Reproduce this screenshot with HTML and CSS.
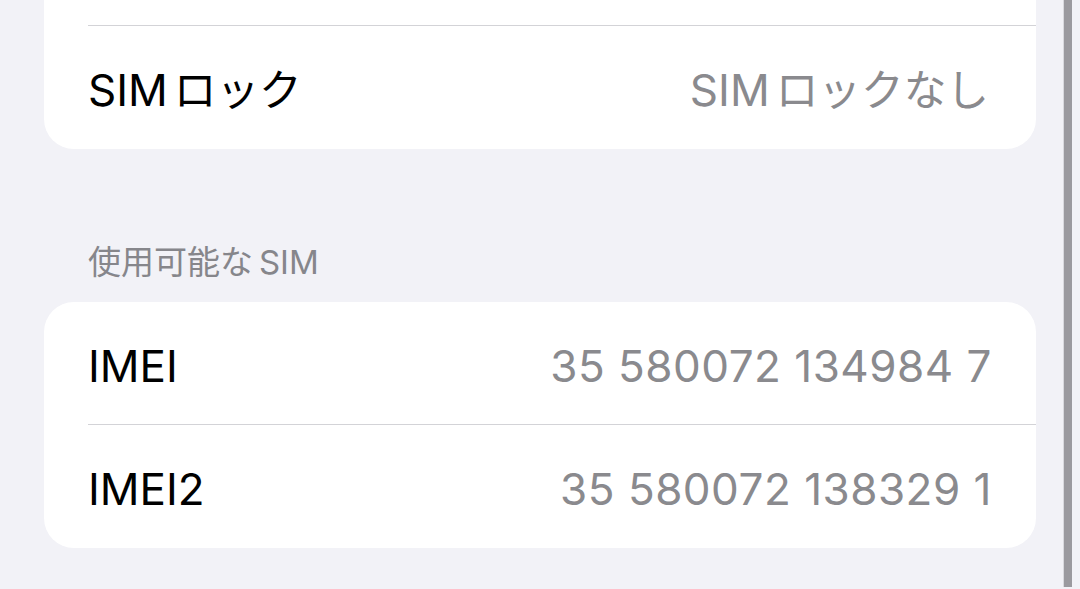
FILE: index.html
```html
<!DOCTYPE html>
<html lang="ja">
<head>
  <meta charset="UTF-8">
  <meta name="viewport" content="width=device-width, initial-scale=1.0">
  <title>情報</title>
  <link rel="stylesheet" href="styles.css">
</head>
<body>

  <div class="screen">
    <main class="content">
      <!-- 上のグループ（先頭行は画面外） -->
      <section class="group group-top">
        <div class="row row-cut"></div>
        <div class="row">
          <div class="row-body">
            <span class="label">SIM<span class="ja">ロック</span></span>
            <span class="value">SIM<span class="ja">ロックなし</span></span>
          </div>
        </div>
      </section>

      <h2 class="group-title">使用可能な<span class="en">SIM</span></h2>

      <section class="group">
        <div class="row row-first">
          <div class="row-body">
            <span class="label">IMEI</span>
            <span class="value num">35 580072 134984 7</span>
          </div>
        </div>
        <div class="row">
          <div class="row-body">
            <span class="label">IMEI2</span>
            <span class="value num">35 580072 138329 1</span>
          </div>
        </div>
      </section>
    </main>

    <div class="scroll-track"></div>
  </div>

</body>
</html>
```

FILE: styles.css
```css
* {
  box-sizing: border-box;
}

html, body {
  margin: 0;
  height: 100%;
}

body {
  background-color: #f2f2f7;
  font-family: Inter, "Noto Sans CJK JP", sans-serif;
  color: #000;
  overflow: hidden;
}

.screen {
  display: flex;
  height: 589px;
}

.content {
  flex: 1;
  padding: 0 27px 0 44px;
}

/* スクロールインジケータ */
.scroll-track {
  width: 9px;
  margin-right: 8px;
  margin-bottom: 2px;
  background-color: #9b9a9f;
  border-left: 1px solid #d9d9de;
}

.group {
  background-color: #fff;
  border-radius: 30px;
  overflow: hidden;
}

.group-top {
  border-radius: 0 0 30px 30px;
}

.row {
  padding-left: 44px;
  height: 124px;
}

.row-cut {
  height: 25px;
}

.row-first {
  height: 122px;
}

.row-first .row-body {
  border-top: none;
}

.row-body {
  display: flex;
  align-items: center;
  justify-content: space-between;
  height: 100%;
  padding: 5px 47px 0 0;
  border-top: 1px solid #d3d3d7;
  font-size: 44px;
  line-height: 1;
}

/* 英字とかなの間の余白 */
.ja {
  margin-left: 0.14em;
  font-size: 0.97em;
}

.en {
  margin-left: 0.18em;
}

.label {
  color: #000;
}

.value {
  color: #8a8a8e;
}

.num {
  letter-spacing: 0.5px;
  margin-right: -3px;
}

.group-title {
  margin: 0;
  padding: 93px 0 20px 44px;
  font-size: 33px;
  font-weight: 400;
  line-height: 40px;
  color: #86868b;
}
```
